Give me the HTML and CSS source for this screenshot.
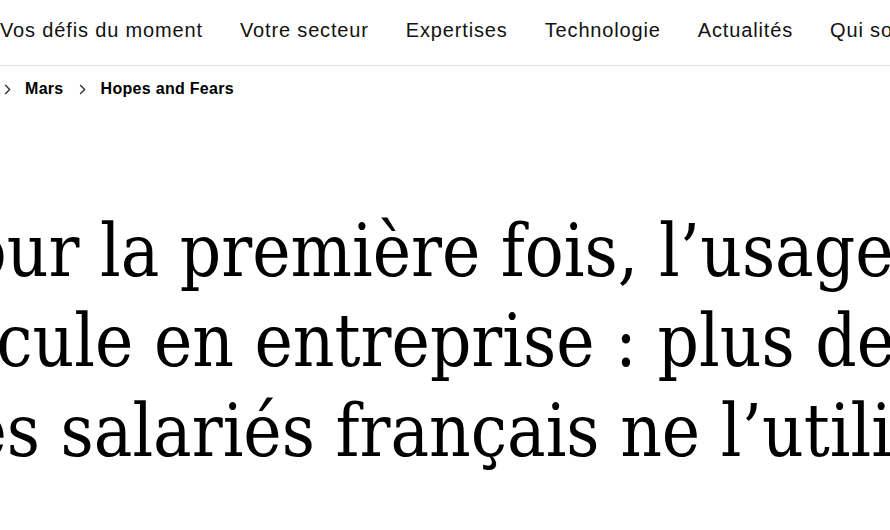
FILE: index.html
```html
<!DOCTYPE html>
<html lang="fr">
<head>
<meta charset="utf-8">
<title>Hopes and Fears</title>
<link rel="stylesheet" href="styles.css">
</head>
<body>
<div class="page">
  <header class="topnav">
    <nav class="menu">
      <a class="menu-item" href="#">Vos défis du moment</a>
      <a class="menu-item" href="#">Votre secteur</a>
      <a class="menu-item" href="#">Expertises</a>
      <a class="menu-item" href="#">Technologie</a>
      <a class="menu-item" href="#">Actualités</a>
      <a class="menu-item" href="#">Qui sommes-nous ?</a>
    </nav>
  </header>
  <div class="breadcrumb">
    <svg class="chev" viewBox="0 0 7 11" width="7" height="11"><path d="M1.2 1 L5.6 5.5 L1.2 10" fill="none" stroke="#333" stroke-width="1.4"/></svg>
    <a class="crumb" href="#">Mars</a>
    <svg class="chev" viewBox="0 0 7 11" width="7" height="11"><path d="M1.2 1 L5.6 5.5 L1.2 10" fill="none" stroke="#333" stroke-width="1.4"/></svg>
    <a class="crumb" href="#">Hopes and Fears</a>
  </div>
  <h1 class="headline">Pour la première fois, l’usage de l’IA<br>recule en entreprise : plus de la moitié<br>des salariés français ne l’utilisent pas</h1>
</div>
</body>
</html>
```
FILE: styles.css
```css
html, body {
  margin: 0;
  padding: 0;
  background: #fff;
}
body {
  width: 890px;
  height: 530px;
  overflow: hidden;
}
.page {
  width: 890px;
  overflow: hidden;
}
.topnav {
  height: 65px;
  border-bottom: 1px solid #dedede;
  box-sizing: content-box;
}
.menu {
  display: flex;
  gap: 37px;
  padding-top: 19px;
  white-space: nowrap;
}
.menu-item {
  font-family: "Liberation Sans", Arial, sans-serif;
  font-size: 20px;
  line-height: 23px;
  letter-spacing: 0.85px;
  color: #111;
  text-decoration: none;
}
.breadcrumb {
  display: flex;
  align-items: center;
  gap: 15px;
  margin-top: 13px;
  padding-left: 4px;
  height: 20px;
}
.chev {
  display: block;
  flex: none;
}
.crumb {
  font-family: "Liberation Sans", Arial, sans-serif;
  font-weight: 700;
  font-size: 16px;
  line-height: 20px;
  letter-spacing: 0.3px;
  color: #000;
  text-decoration: none;
  white-space: nowrap;
}
.crumb:first-of-type {
  margin-left: -1px;
}
.headline {
  margin: 107px 0 0 -73px;
  font-family: "DejaVu Serif Condensed", "DejaVu Serif", serif;
  font-stretch: condensed;
  font-weight: 400;
  font-size: 72px;
  line-height: 90px;
  color: #000;
  white-space: nowrap;
}
```
